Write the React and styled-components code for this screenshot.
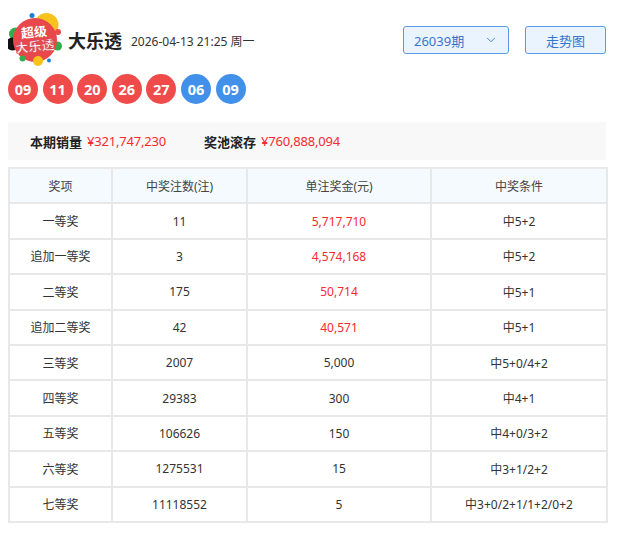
import React from 'react'
import styled, { createGlobalStyle } from 'styled-components'
import { ChevronDown } from 'lucide-react'

const GlobalStyle = createGlobalStyle`
    body {
        margin:0;
        background:#fff;
        font-family:"Noto Sans", "Noto Sans CJK SC", sans-serif;
        color:#333;
    }
`

const Page = styled.div`
    padding:12px 12px 0 8px;
`
const Header = styled.div`
    display:flex;
    align-items:center;
    height:55px;
`
const Logo = styled.svg`
    width:54px;
    height:54px;
    flex:none;
`
const Title = styled.h1`
    margin:0 0 0 6px;
    font-size:18px;
    font-weight:700;
    color:#222;
    font-family:"Noto Sans CJK SC", sans-serif;
`
const DateText = styled.span`
    margin-left:9px;
    font-size:12px;
    color:#333;
    padding-top:2px;
`
const Spacer = styled.div`
    flex:1;
`
const BlueBox = styled.div`
    display:flex;
    align-items:center;
    box-sizing:border-box;
    height:28px;
    width:${p => p.$w}px;
    padding:0 10px;
    justify-content:${p => p.$center ? 'center' : 'space-between'};
    background:#eaf4ff;
    border:1px solid #5c9be3;
    border-radius:3px;
    color:#3876cc;
    font-size:13px;
    margin-left:${p => p.$ml || 0}px;
    margin-top:1px;
`
const Balls = styled.div`
    display:flex;
    gap:4.6px;
    margin-top:7px;
`
const Ball = styled.div`
    width:30px;
    height:30px;
    border-radius:50%;
    background:${p => p.$blue ? '#4190ea' : '#f04b4b'};
    color:#fff;
    font-weight:700;
    font-size:14.5px;
    display:flex;
    align-items:center;
    justify-content:center;
`
const Summary = styled.div`
    margin-top:18px;
    height:38px;
    background:#f8f8f8;
    display:flex;
    align-items:center;
    padding-left:22px;
    font-size:13px;
    gap:38px;
`
const SumItem = styled.div`
    display:flex;
    gap:5px;
`
const SumLabel = styled.span`
    font-weight:700;
    color:#222;
`
const Red = styled.span`
    color:#f72a2f;
    letter-spacing:-0.2px;
`
const Table = styled.table`
    margin-top:7px;
    width:598px;
    border-collapse:collapse;
    table-layout:fixed;
    font-size:12px;
    text-align:center;
`
const Th = styled.th`
    font-weight:400;
    color:#444;
    background:#f5faff;
    border:2px solid #e8e8e8;
    height:33.4px;
    padding:0;
`
const Td = styled.td`
    border:2px solid #e8e8e8;
    height:33.4px;
    padding:0;
    color:${p => p.$red ? '#f72a2f' : '#333'};
`

const rows = [
    ['一等奖', '11', '5,717,710', '中5+2', true],
    ['追加一等奖', '3', '4,574,168', '中5+2', true],
    ['二等奖', '175', '50,714', '中5+1', true],
    ['追加二等奖', '42', '40,571', '中5+1', true],
    ['三等奖', '2007', '5,000', '中5+0/4+2', false],
    ['四等奖', '29383', '300', '中4+1', false],
    ['五等奖', '106626', '150', '中4+0/3+2', false],
    ['六等奖', '1275531', '15', '中3+1/2+2', false],
    ['七等奖', '11118552', '5', '中3+0/2+1/1+2/0+2', false],
]

const balls = [['09'], ['11'], ['20'], ['26'], ['27'], ['06', true], ['09', true]]

function LottoLogo() {
    return (
        <Logo viewBox="0 0 54 54">
            <circle cx="38.5" cy="12" r="12" fill="#f7c21b" />
            <circle cx="24" cy="2.5" r="2.5" fill="#1a7fd6" />
            <circle cx="7.5" cy="21" r="6.5" fill="#2fae4a" />
            <circle cx="4.5" cy="31" r="6.5" fill="#111" />
            <circle cx="50" cy="19" r="3" fill="#e94b4b" />
            <circle cx="49.5" cy="33" r="4.5" fill="#2fae4a" />
            <circle cx="27" cy="27" r="22" fill="#e8474b" />
            <circle cx="30" cy="48" r="5" fill="#f7c21b" />
            <circle cx="14.5" cy="45.5" r="3" fill="#2fae4a" />
            <circle cx="41" cy="47.5" r="2" fill="#1a7fd6" />
            <text x="26" y="24" textAnchor="middle" fontSize="13" fontWeight="700" fill="#fff"
                fontFamily="Noto Sans CJK SC, sans-serif" transform="rotate(-6 26 20)">超级</text>
            <text x="27" y="38" textAnchor="middle" fontSize="13" fontWeight="700" fill="#fff"
                stroke="#c9303a" strokeWidth="0.4"
                fontFamily="Noto Sans CJK SC, sans-serif" transform="rotate(-6 27 33)">大乐透</text>
        </Logo>
    )
}

export default function App() {
    return (
        <>
            <GlobalStyle />
            <Page>
                <Header>
                    <LottoLogo />
                    <Title>大乐透</Title>
                    <DateText>2026-04-13 21:25 周一</DateText>
                    <Spacer />
                    <BlueBox $w={106}>
                        <span>26039期</span>
                        <ChevronDown size={14} strokeWidth={1.6} />
                    </BlueBox>
                    <BlueBox $w={81} $ml={16} $center>走势图</BlueBox>
                </Header>
                <Balls>
                    {balls.map(([n, blue], i) => <Ball key={i} $blue={blue}>{n}</Ball>)}
                </Balls>
                <Summary>
                    <SumItem>
                        <SumLabel>本期销量</SumLabel>
                        <Red>¥321,747,230</Red>
                    </SumItem>
                    <SumItem>
                        <SumLabel>奖池滚存</SumLabel>
                        <Red>¥760,888,094</Red>
                    </SumItem>
                </Summary>
                <Table>
                    <colgroup>
                        <col style={{ width: 103 }} />
                        <col style={{ width: 135 }} />
                        <col style={{ width: 184 }} />
                        <col style={{ width: 176 }} />
                    </colgroup>
                    <thead>
                        <tr>
                            <Th>奖项</Th>
                            <Th>中奖注数(注)</Th>
                            <Th>单注奖金(元)</Th>
                            <Th>中奖条件</Th>
                        </tr>
                    </thead>
                    <tbody>
                        {rows.map(r => (
                            <tr key={r[0]}>
                                <Td>{r[0]}</Td>
                                <Td>{r[1]}</Td>
                                <Td $red={r[4]}>{r[2]}</Td>
                                <Td>{r[3]}</Td>
                            </tr>
                        ))}
                    </tbody>
                </Table>
            </Page>
        </>
    )
}
